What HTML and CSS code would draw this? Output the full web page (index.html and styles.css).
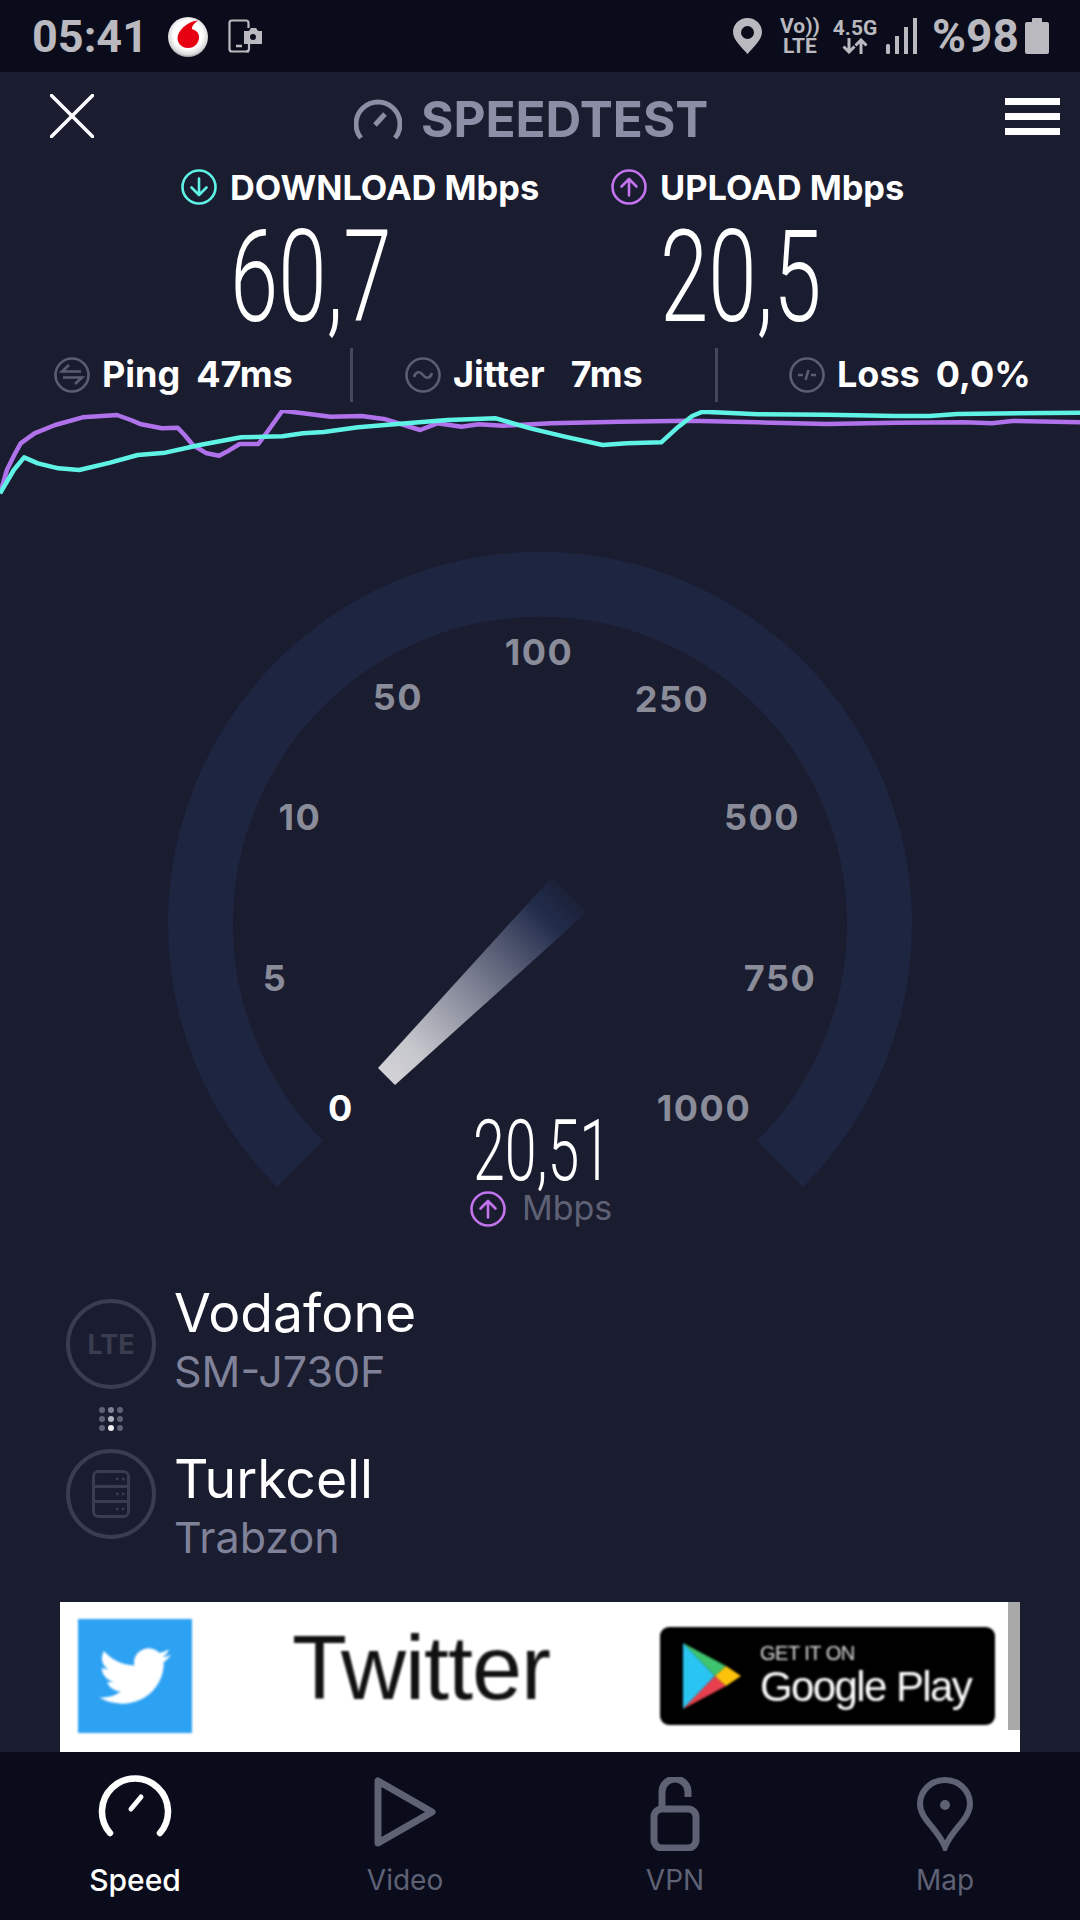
FILE: index.html
```html
<!DOCTYPE html>
<html lang="en">
<head>
  <meta charset="UTF-8"/>
  <title>Speedtest</title>
  <link rel="stylesheet" href="styles.css">
</head>
<body>
  <div class="screen">
    <div class="status-bar">
      <span class="clock">05:41</span>
      <svg class="voda" width="40" height="40" viewBox="0 0 40 40">
        <defs>
          <radialGradient id="vodaGlass" cx="0.5" cy="0.45" r="0.55">
            <stop offset="0.65" stop-color="#ffffff"/>
            <stop offset="0.9" stop-color="#d8d8da"/>
            <stop offset="1" stop-color="#9b9b9f"/>
          </radialGradient>
        </defs>
        <circle cx="20" cy="20" r="20" fill="url(#vodaGlass)"/>
        <path d="M30 3.500C22 4 13 10 10 18C8 25 13 31 20 31C27 31 31 26 31 20C31 15 27 13 24 12C24 8 27 6 30 3.500Z" fill="#e60012"/>
      </svg>
      <svg class="shot" width="34" height="34" viewBox="0 0 34 34" fill="none" stroke="#b9b9bf" stroke-width="2.200">
        <path d="M21 32.500H4Q1.500 32.500 1.500 30V4Q1.500 1.500 4 1.500H18Q20.500 1.500 20.500 4V9"/>
        <path d="M21 25V30Q21 32.500 18 32.500"/>
        <path d="M8 27H14" stroke-width="2.500"/>
        <path d="M16 12H21L23 9H28L30 12H34V25H16Z" fill="#b9b9bf" stroke="none"/>
        <circle cx="25" cy="18" r="3" fill="#0a0c1b" stroke="none"/>
      </svg>
      <div class="status-right">
        <svg class="pin" width="29" height="36" viewBox="0 0 29 36">
          <path fill-rule="evenodd" fill="#b9b9bf" d="M14.500 0C6.500 0 0 6.300 0 14C0 22 9 29.500 14.500 36C20 29.500 29 22 29 14C29 6.300 22.500 0 14.500 0ZM14.500 8A6.500 6.500 0 1 1 14.500 21A6.500 6.500 0 1 1 14.500 8Z"/>
        </svg>
        <div class="volte"><span>Vo))</span><span>LTE</span></div>
        <div class="net">
          <span>4.5G</span>
          <svg width="26" height="16" viewBox="0 0 26 16" fill="none" stroke="#b9b9bf" stroke-width="3">
            <path d="M7 0V14M1.500 8.500L7 14L12.500 8.500M19 16V2M13.500 7.500L19 2L24.500 7.500"/>
          </svg>
        </div>
        <svg class="signal" width="31" height="36" viewBox="0 0 31 36" fill="#b9b9bf">
          <rect x="0" y="26" width="4" height="10" rx="1.500"/>
          <rect x="9" y="18" width="4" height="18"/>
          <rect x="18" y="9" width="4" height="27"/>
          <rect x="27" y="0" width="4" height="36"/>
        </svg>
        <span class="battery-text">%98</span>
        <svg class="battery" width="24" height="36" viewBox="0 0 24 36" fill="#b9b9bf">
          <rect x="7" y="0" width="10" height="5" rx="1"/>
          <rect x="0" y="4" width="24" height="32" rx="2"/>
        </svg>
      </div>
    </div>

    <div class="top-bar">
      <svg class="close" width="44" height="44" viewBox="0 0 44 44" stroke="#fff" stroke-width="3.500" stroke-linecap="round">
        <path d="M1.500 1.500L42.500 42.500M42.500 1.500L1.500 42.500"/>
      </svg>
      <div class="brand">
        <svg width="48" height="42" viewBox="0 0 48 42" fill="none" stroke="#8b8ea5" stroke-width="5">
          <path d="M7 40A22 22 0 1 1 41 40"/>
          <path d="M21 27L31 16" stroke-width="5"/>
        </svg>
        <span>SPEEDTEST</span>
      </div>
      <div class="burger"><i></i><i></i><i></i></div>
    </div>

    <div class="speeds">
      <div class="speed">
        <div class="speed-head">
          <svg width="36" height="36" viewBox="0 0 36 36" fill="none" stroke="#5ff3e6" stroke-width="2.600" stroke-linecap="round" stroke-linejoin="round">
            <circle cx="18" cy="18" r="16.500"/>
            <path d="M18 9.500V25.500M10.500 18.500L18 26L25.500 18.500"/>
          </svg>
          <span>DOWNLOAD Mbps</span>
        </div>
        <div class="speed-value">60,7</div>
      </div>
      <div class="speed">
        <div class="speed-head">
          <svg width="36" height="36" viewBox="0 0 36 36" fill="none" stroke="#c273ee" stroke-width="2.600" stroke-linecap="round" stroke-linejoin="round">
            <circle cx="18" cy="18" r="16.500"/>
            <path d="M18 26.500V10.500M10.500 17.500L18 10L25.500 17.500"/>
          </svg>
          <span>UPLOAD Mbps</span>
        </div>
        <div class="speed-value">20,5</div>
      </div>
    </div>

    <div class="metrics">
      <div class="metric metric-ping">
        <svg width="36" height="36" viewBox="0 0 36 36" fill="none" stroke="#5b5d70" stroke-width="2.600">
          <circle cx="18" cy="18" r="16.500"/>
          <path d="M27 14.500H8L15 8M9 20.500H28L21 27"/>
        </svg>
        <span class="metric-name">Ping</span><span>47ms</span>
      </div>
      <div class="metric metric-jitter">
        <svg width="36" height="36" viewBox="0 0 36 36" fill="none" stroke="#5b5d70" stroke-width="2.600">
          <circle cx="18" cy="18" r="16.500"/>
          <path d="M9 20C11 14 15 14 18 18C21 22 25 22 27 16"/>
        </svg>
        <span class="metric-name">Jitter</span><span>7ms</span>
      </div>
      <div class="metric metric-loss">
        <svg width="36" height="36" viewBox="0 0 36 36" fill="none" stroke="#5b5d70" stroke-width="2.600">
          <circle cx="18" cy="18" r="16.500"/>
          <path d="M9 18H14M22 18H27M16.500 23L19.500 13"/>
        </svg>
        <span class="metric-name">Loss</span><span>0,0%</span>
      </div>
    </div>

    <svg class="chart" width="1080" height="90" viewBox="0 240 1568 270" preserveAspectRatio="none" fill="none" stroke-width="4.500" stroke-linejoin="round">
      <polyline vector-effect="non-scaling-stroke" stroke="#b072ea" points="0,490 10,420 22,370 30,340 50,310 80,285 120,262 170,255 190,270 205,283 235,295 258,293 268,315 280,345 300,370 318,377 332,362 348,342 375,342 390,300 410,242 440,250 480,260 525,258 560,268 610,300 635,280 670,290 695,283 730,287 800,280 900,275 1000,272 1100,277 1200,282 1300,278 1400,277 1440,280 1470,273 1568,277"/>
      <polyline vector-effect="non-scaling-stroke" stroke="#5ff3e6" points="0,490 20,420 35,382 55,400 85,415 115,420 160,398 200,375 240,368 290,345 350,322 410,319 440,310 470,306 520,292 590,280 650,270 720,265 770,295 820,320 875,345 910,340 960,337 985,290 1005,258 1020,245 1100,253 1200,254 1300,258 1350,258 1390,252 1568,248"/>
    </svg>

    <svg class="gauge" width="1080" height="740" viewBox="0 500 1080 740">
      <defs>
        <linearGradient id="needleFade" gradientUnits="userSpaceOnUse" x1="386" y1="1076" x2="570" y2="895">
          <stop offset="0" stop-color="#d2d2d6"/>
          <stop offset="0.15" stop-color="#c6c7cd"/>
          <stop offset="0.55" stop-color="#6f7387"/>
          <stop offset="0.87" stop-color="#222c4b"/>
          <stop offset="1" stop-color="#1b2138"/>
        </linearGradient>
      </defs>
      <path d="M300 1164A339.500 339.500 0 1 1 780 1164" fill="none" stroke="#1e2540" stroke-width="65"/>
      <polygon points="378,1068 395,1085 587,912 552,877" fill="url(#needleFade)"/>
      <g class="tick">
        <text class="tick-on" x="341" y="1121">0</text>
        <text x="275" y="991">5</text>
        <text x="300" y="830">10</text>
        <text x="398" y="710">50</text>
        <text x="539" y="665">100</text>
        <text x="672" y="712">250</text>
        <text x="762" y="830">500</text>
        <text x="780" y="991">750</text>
        <text x="704" y="1121">1000</text>
      </g>
      <text class="live-value" x="473" y="1180" textLength="138" lengthAdjust="spacingAndGlyphs">20,51</text>
      <g fill="none" stroke="#c273ee" stroke-width="2.600" stroke-linecap="round" stroke-linejoin="round">
        <circle cx="488" cy="1209" r="16.500"/>
        <path d="M488 1217.500V1201.500M480.500 1208.500L488 1201L495.500 1208.500"/>
      </g>
      <text class="live-unit" x="522" y="1220">Mbps</text>
    </svg>

    <div class="servers">
      <div class="server server-isp">
        <div class="server-icon"><span>LTE</span></div>
        <div class="server-text">
          <div class="server-name">Vodafone</div>
          <div class="server-sub">SM-J730F</div>
        </div>
      </div>
      <div class="dots">
        <i></i><i class="lit-1"></i><i></i>
        <i></i><i class="lit-2"></i><i></i>
        <i></i><i class="lit-3"></i><i></i>
      </div>
      <div class="server server-host">
        <div class="server-icon">
          <svg width="38" height="48" viewBox="0 0 38 48" fill="none" stroke="#3a3c4f" stroke-width="3">
            <rect x="1.500" y="1.500" width="35" height="45" rx="5"/>
            <path d="M1.500 16.500H36.500M1.500 31.500H36.500"/>
            <path d="M24 9H26.500M30 9H32.500M24 24H26.500M30 24H32.500M24 39H26.500M30 39H32.500" stroke-width="2.500"/>
          </svg>
        </div>
        <div class="server-text">
          <div class="server-name">Turkcell</div>
          <div class="server-sub">Trabzon</div>
        </div>
      </div>
    </div>

    <div class="ad">
      <div class="ad-logo">
        <svg width="72" height="68" viewBox="0 0 24 24" fill="#fff" preserveAspectRatio="none">
          <path d="M23.953 4.570a10 10 0 01-2.825.775 4.958 4.958 0 002.163-2.723c-.951.555-2.005.959-3.127 1.184a4.920 4.920 0 00-8.384 4.482C7.690 8.095 4.067 6.130 1.640 3.162a4.822 4.822 0 00-.666 2.475c0 1.710.870 3.213 2.188 4.096a4.904 4.904 0 01-2.228-.616v.060a4.923 4.923 0 003.946 4.827 4.996 4.996 0 01-2.212.085 4.936 4.936 0 004.604 3.417 9.867 9.867 0 01-6.102 2.105c-.390 0-.779-.023-1.170-.067a13.995 13.995 0 007.557 2.209c9.053 0 13.998-7.496 13.998-13.985 0-.210 0-.420-.015-.630A9.935 9.935 0 0024 4.590z"/>
        </svg>
      </div>
      <div class="ad-title">Twitter</div>
      <div class="ad-badge">
        <svg width="58" height="66" viewBox="0 0 58 66">
          <polygon points="0,0 0,66 32,33" fill="#29c4f2"/>
          <polygon points="0,0 32,33 43,23" fill="#3fc46f"/>
          <polygon points="0,66 32,33 43,43" fill="#e8404f"/>
          <polygon points="43,23 58,33 43,43 32,33" fill="#fcc30a"/>
        </svg>
        <div class="ad-badge-text">
          <span class="ad-get">GET IT ON</span>
          <span class="ad-store">Google Play</span>
        </div>
      </div>
      <div class="ad-edge"></div>
    </div>

    <div class="tabs">
      <div class="tab tab-on">
        <svg width="74" height="64" viewBox="0 0 74 64" fill="none" stroke="#fff" stroke-width="6.500" stroke-linecap="round">
          <path d="M12 60A33 33 0 1 1 62 60"/>
          <path d="M33 36L43 24" stroke-width="5"/>
        </svg>
        <span>Speed</span>
      </div>
      <div class="tab">
        <svg width="74" height="70" viewBox="0 0 74 70" fill="none" stroke="#5f6175" stroke-width="7" stroke-linejoin="round">
          <path d="M10 4V66L64 35Z"/>
        </svg>
        <span>Video</span>
      </div>
      <div class="tab">
        <svg width="74" height="74" viewBox="0 0 74 74" fill="none" stroke="#5f6175" stroke-width="7">
          <rect x="16" y="32" width="42" height="39" rx="8"/>
          <path d="M24 32V15A13 13 0 0 1 50 15V20"/>
        </svg>
        <span>VPN</span>
      </div>
      <div class="tab">
        <svg width="74" height="74" viewBox="0 0 74 74" fill="none" stroke="#5f6175" stroke-width="6">
          <path d="M37 70C30 52 12 42 12 27A25 24 0 0 1 62 27C62 42 44 52 37 70Z"/>
          <circle cx="37" cy="28" r="5" fill="#5f6175" stroke="none"/>
        </svg>
        <span>Map</span>
      </div>
    </div>
  </div>
</body>
</html>
```

FILE: styles.css
```css
html, body { margin:0; padding:0; background:#1a1c2f; }
body { font-family:Inter, "Open Sans", sans-serif; color:#fff; }
.screen { width:1080px; height:1920px; overflow:hidden; display:flex; flex-direction:column; }

/* status bar */
.status-bar { height:72px; background:#0a0c1b; display:flex; align-items:center; padding:0 31px 0 32px; color:#b9b9bf; flex-shrink:0; }
.clock { font-family:Roboto, sans-serif; font-weight:700; font-size:45px; width:136px; }
.voda { margin-left:0; margin-top:1px; }
.shot { margin-left:20px; }
.status-right { margin-left:auto; display:flex; align-items:center; }
.volte, .net { display:flex; flex-direction:column; font-family:Roboto, sans-serif; font-weight:700; font-size:21px; line-height:20px; align-items:center; }
.volte { width:38px; margin-left:19px; }
.net { width:40px; margin-left:16px; font-size:21px; }
.signal { margin-left:11px; }
.battery-text { font-family:Roboto, sans-serif; font-weight:700; font-size:46px; margin-left:15px; width:93px; }

/* speedtest header */
.top-bar { height:96px; display:flex; align-items:center; padding:0 20px 0 50px; flex-shrink:0; }
.close { margin-top:-8px; }
.brand { display:flex; align-items:center; gap:19px; font-weight:700; font-size:49.500px; color:#8b8ea5; margin:-3px 0 0 260px; }
.burger { display:flex; flex-direction:column; gap:8px; width:55px; margin:-8px 0 0 auto; }
.burger i { display:block; height:7px; background:#fff; }

/* download / upload */
.speeds { display:grid; grid-template-columns:430px 1fr; padding-left:181px; height:180px; flex-shrink:0; }
.speed-head { display:flex; align-items:center; gap:13px; font-weight:700; font-size:34.400px; height:36px; margin-top:1px; }
.speed-value { font-family:Roboto, sans-serif; font-weight:300; font-size:128px; line-height:128px; margin:8px 0 0 49px; transform:scaleX(0.68); transform-origin:left; white-space:nowrap; }

/* ping row */
.metrics { display:grid; grid-template-columns:353px 365px 1fr; height:54px; flex-shrink:0; }
.metric { display:flex; align-items:center; font-weight:700; font-size:36px; }
.metric span { margin-bottom:3px; }
.metric svg { margin-right:12px; }
.metric-name { margin-right:16px; }
.metric-ping { padding-left:54px; border-right:3px solid #45475a; }
.metric-jitter { padding-left:52px; border-right:3px solid #45475a; }
.metric-jitter .metric-name { margin-right:26px; }
.metric-loss { padding-left:71px; }

.chart { display:block; flex-shrink:0; margin-top:8px; }
.gauge { display:block; flex-shrink:0; }

.tick text { font-weight:700; font-size:36px; letter-spacing:1.500px; fill:#8a8c99; text-anchor:middle; }
.tick .tick-on { fill:#fff; }
.live-value { font-family:Roboto, sans-serif; font-weight:300; font-size:86px; fill:#fff; }
.live-unit { font-size:34px; fill:#5f6175; }

/* servers */
.servers { height:362px; padding:59px 0 0 66px; box-sizing:border-box; flex-shrink:0; }
.server { display:flex; align-items:center; height:90px; gap:18px; }
.server-icon { width:90px; height:90px; box-sizing:border-box; border:4px solid #3a3c4f; border-radius:50%; display:flex; align-items:center; justify-content:center; color:#3a3c4f; font-weight:700; font-size:27px; flex-shrink:0; }
.server-text { height:118px; flex-shrink:0; }
.server-isp .server-text { margin-bottom:5px; }
.server-host .server-text { margin-top:27px; }
.server-name { font-size:53.500px; line-height:59px; }
.server-sub { font-size:43px; line-height:59px; color:#7f8299; }
.dots { display:grid; grid-template-columns:repeat(3, 6px); gap:3px; width:24px; height:60px; margin-left:33px; align-content:center; }
.dots i { width:6px; height:6px; border-radius:50%; background:#5f6175; }
.dots .lit-1 { background:#7f8299; }
.dots .lit-2 { background:#b4b5c0; }
.dots .lit-3 { background:#f0f0f3; }

/* ad */
.ad { height:150px; margin:0 60px; background:#fff; display:flex; align-items:center; position:relative; flex-shrink:0; overflow:hidden; }
.ad-logo { width:114px; height:114px; margin-left:18px; margin-top:-3px; background:#2da1f2; display:flex; align-items:center; justify-content:center; flex-shrink:0; filter:blur(1px); }
.ad-title { font-family:"Liberation Sans", sans-serif; font-size:90px; color:#111; margin-left:100px; width:368px; letter-spacing:-1px; margin-top:-18px; filter:blur(1px); }
.ad-badge { width:335px; height:98px; background:#000; border-radius:9px; display:flex; align-items:center; flex-shrink:0; box-sizing:border-box; padding-left:23px; margin-top:-3px; filter:blur(0.8px); }
.ad-badge-text { display:flex; flex-direction:column; margin-left:19px; color:#fff; font-family:"Liberation Sans", sans-serif; }
.ad-get { font-size:20px; line-height:22px; color:#ddd; letter-spacing:-0.500px; }
.ad-store { font-size:42px; line-height:46px; letter-spacing:-1.600px; }
.ad-edge { position:absolute; right:0; top:0; width:12px; height:128px; background:#a9a9a9; }

/* bottom tabs */
.tabs { height:168px; background:#0a0c1b; display:grid; grid-template-columns:repeat(4, 270px); flex-shrink:0; }
.tab { display:flex; flex-direction:column; align-items:center; position:relative; padding-top:25px; box-sizing:border-box; color:#5f6175; font-size:28px; }
.tab span { position:absolute; top:111px; }
.tab-on { color:#fff; font-weight:500; font-size:30px; padding-top:21px; }
.tab-on span { top:110px; }
```
